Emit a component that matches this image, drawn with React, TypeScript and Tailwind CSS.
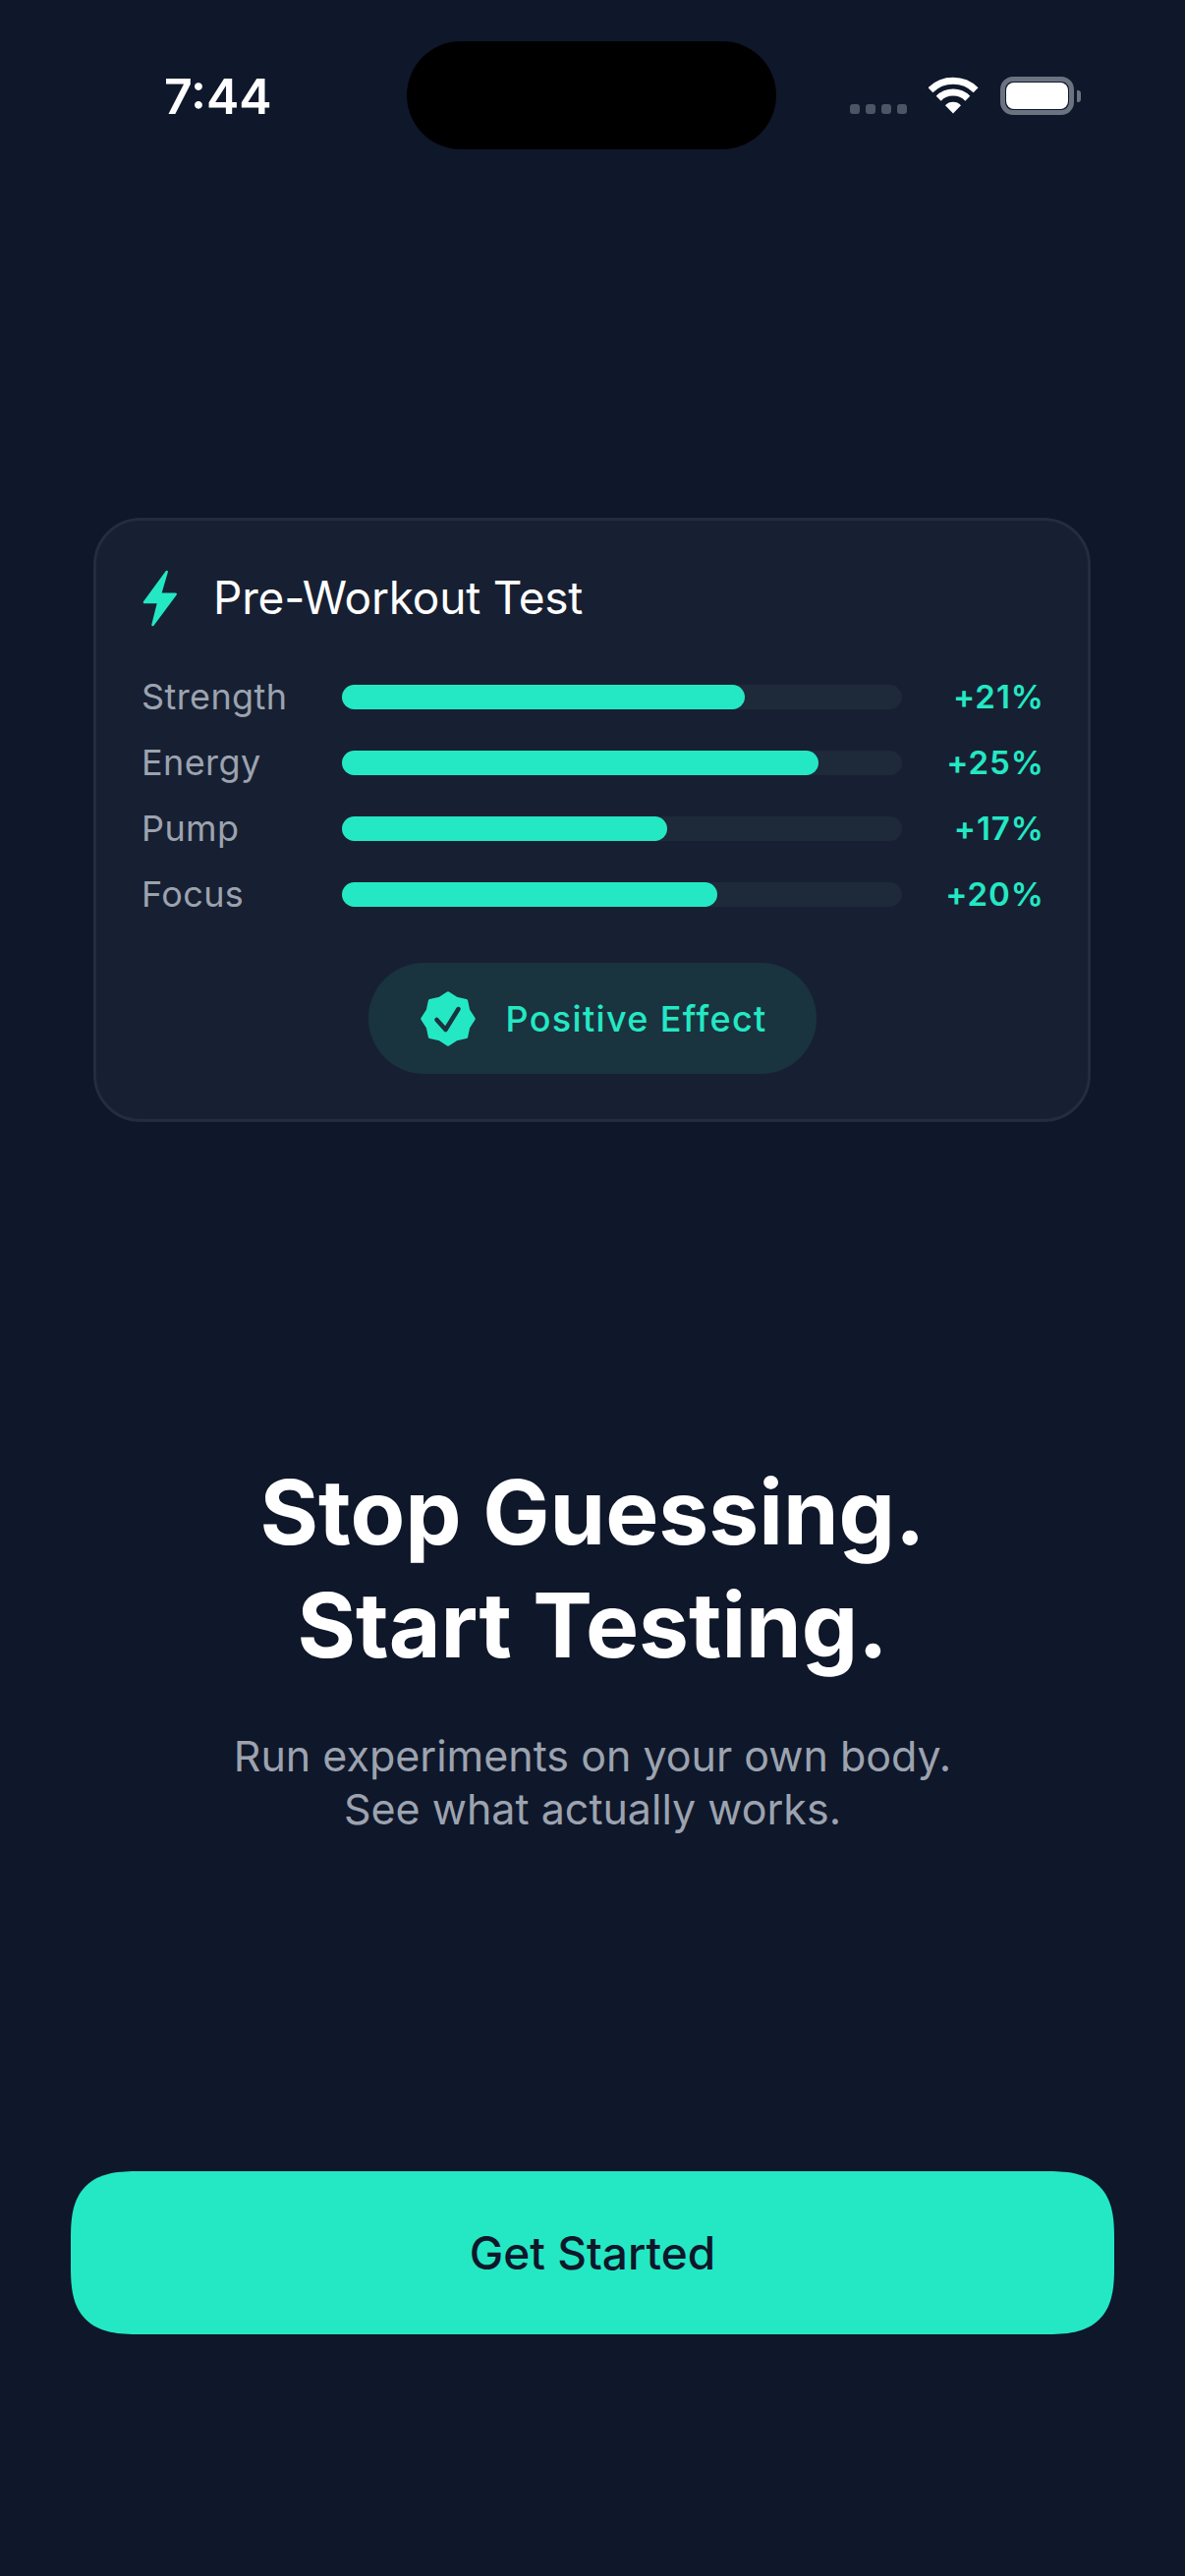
const metrics = [
  { label: "Strength", width: 410, value: "+21%" },
  { label: "Energy", width: 485, value: "+25%" },
  { label: "Pump", width: 331, value: "+17%" },
  { label: "Focus", width: 382, value: "+20%" },
];

function WifiIcon() {
  return (
    <svg width="51" height="38" viewBox="0 0 51 38" fill="none">
      <path d="M1.9 13.7A33 33 0 0 1 48.1 13.7" stroke="#fff" strokeWidth="7" />
      <path d="M10.2 22.2A21 21 0 0 1 39.8 22.2" stroke="#fff" strokeWidth="7" />
      <path d="M25 37.5L17 29.2A11 11 0 0 1 33 29.2Z" fill="#fff" />
    </svg>
  );
}

function Bolt() {
  return (
    <svg width="36" height="58" viewBox="0 0 36 58" fill="#24e8c4" stroke="#24e8c4" strokeWidth="2.5" strokeLinejoin="round">
      <polygon points="24.7,2 2,33 16.3,33 10.5,56 33.7,24.7 18,24.7" />
    </svg>
  );
}

function PositiveBadge() {
  return (
    <svg width="60" height="60" viewBox="0 0 60 60" fill="none">
      <polygon
        points="30,4 38.5,9.5 48.4,11.6 50.5,21.5 56,30 50.5,38.5 48.4,48.4 38.5,50.5 30,56 21.5,50.5 11.6,48.4 9.5,38.5 4,30 9.5,21.5 11.6,11.6 21.5,9.5"
        fill="#24e8c4"
        stroke="#24e8c4"
        strokeWidth="3.5"
        strokeLinejoin="round"
      />
      <path d="M18.5 31L27.5 41L40.5 20" stroke="#19333f" strokeWidth="4.5" strokeLinecap="round" strokeLinejoin="round" />
    </svg>
  );
}

export default function App() {
  return (
    <div className="w-[1206px] h-[2622px] bg-[#0f172a] flex flex-col overflow-hidden font-['Inter',sans-serif]">
      {/* status bar */}
      <div className="flex items-start pt-[42px] h-[152px] shrink-0">
        <div className="w-[414px] pl-[167px] pt-[26px] text-[50px] leading-[60px] font-semibold text-white">7:44</div>
        <div className="w-[376px] h-[110px] rounded-[55px] bg-black" />
        <div className="flex items-end pl-[75px] pt-[36px]">
          <div className="flex gap-[6px] mb-[0px] mr-[22px]">
            <span className="w-[10px] h-[10px] rounded-[3px] bg-[#4b5563]" />
            <span className="w-[10px] h-[10px] rounded-[3px] bg-[#4b5563]" />
            <span className="w-[10px] h-[10px] rounded-[3px] bg-[#4b5563]" />
            <span className="w-[10px] h-[10px] rounded-[3px] bg-[#4b5563]" />
          </div>
          <WifiIcon />
          <div className="flex items-center ml-[22px] mb-[-1px]">
            <div className="w-[75px] h-[39px] rounded-[13px] border-[5px] border-[#6b7280] p-[1px]">
              <div className="w-full h-full rounded-[8px] bg-white" />
            </div>
            <div className="w-[4px] h-[12px] ml-[3px] rounded-r-[3px] bg-[#6b7280]" />
          </div>
        </div>
      </div>

      {/* result card */}
      <div className="mt-[375px] ml-[95px] w-[1015px] h-[615px] shrink-0 rounded-[48px] border-[3px] border-[#232d40] bg-[#172032] pl-[46px] pr-[44px] pt-[49px]">
        <div className="flex items-center h-[60px] pl-[1px]">
          <Bolt />
          <div className="ml-[36px] pb-[2px] text-[46px] leading-[58px] font-normal text-white tracking-[-0.2px]">Pre-Workout Test</div>
        </div>
        <div className="mt-[58px] flex flex-col gap-[42px]">
          {metrics.map((m) => (
            <div key={m.label} className="flex items-center h-[25px]">
              <div className="w-[204px] shrink-0 pb-[2px] text-[36px] leading-[42px] text-[#9ca3af] tracking-[0.4px]">{m.label}</div>
              <div className="w-[570px] h-[25px] shrink-0 rounded-full bg-[#1e2939]">
                <div className="h-full rounded-full bg-[#24e8c4]" style={{ width: m.width }} />
              </div>
              <div className="flex-1 pb-[2px] text-right text-[33px] leading-[42px] font-semibold text-[#24e8c4] tracking-[1px]">{m.value}</div>
            </div>
          ))}
        </div>
        <div className="mt-[57px] pr-[2px] flex justify-center">
          <div className="flex items-center w-[456px] h-[113px] rounded-full bg-[#19333f] pl-[51px]">
            <PositiveBadge />
            <span className="ml-[29px] text-[36px] leading-[44px] font-medium text-[#24e8c4] tracking-[1.35px]">Positive Effect</span>
          </div>
        </div>
      </div>

      {/* headline */}
      <div className="mt-[340px] text-center text-[91px] leading-[115px] font-bold text-white">
        <div>Stop Guessing.</div>
        <div>Start Testing.</div>
      </div>
      <div className="mt-[48px] text-center text-[43px] leading-[54px] text-[#9ca3af]">
        <div>Run experiments on your own body.</div>
        <div>See what actually works.</div>
      </div>

      {/* action */}
      <div className="mt-[342px] mx-[72px] h-[166px] shrink-0 rounded-[70px] [corner-shape:superellipse(1.5)] bg-[#24e8c4] flex items-center justify-center text-[46px] font-medium text-[#0f172a]">
        Get Started
      </div>
    </div>
  );
}
